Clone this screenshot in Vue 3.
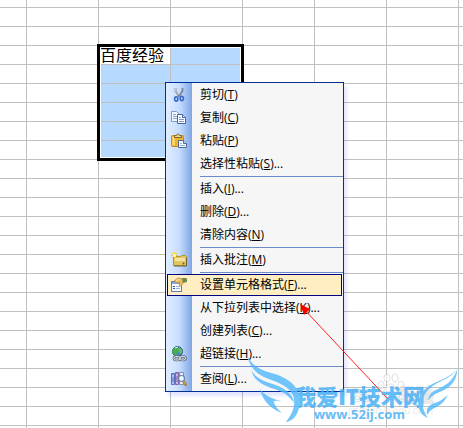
<script setup>
import { ref } from 'vue'

const rows = 60
const columns = 27
const activeItem = ref('format')

const groups = [
  [
    { id: 'cut', label: '剪切', hotkey: 'T', icon: 'cut' },
    { id: 'copy', label: '复制', hotkey: 'C', icon: 'copy' },
    { id: 'paste', label: '粘贴', hotkey: 'P', icon: 'paste' },
    { id: 'paste-special', label: '选择性粘贴', hotkey: 'S', more: true }
  ],
  [
    { id: 'insert', label: '插入', hotkey: 'I', more: true },
    { id: 'delete', label: '删除', hotkey: 'D', more: true },
    { id: 'clear', label: '清除内容', hotkey: 'N' }
  ],
  [{ id: 'comment', label: '插入批注', hotkey: 'M', icon: 'comment' }],
  [
    { id: 'format', label: '设置单元格格式', hotkey: 'F', more: true, icon: 'format' },
    { id: 'pick', label: '从下拉列表中选择', hotkey: 'K', more: true },
    { id: 'list', label: '创建列表', hotkey: 'C', more: true },
    { id: 'link', label: '超链接', hotkey: 'H', more: true, icon: 'link' }
  ],
  [{ id: 'lookup', label: '查阅', hotkey: 'L', more: true, icon: 'lookup' }]
]

function isSelected(row, col) {
  return row >= 4 && row <= 9 && (col === 3 || col === 4)
}

function isActiveCell(row, col) {
  return row === 4 && col === 3
}
</script>

<template>
  <main class="sheet">
    <table class="grid">
      <colgroup>
        <col class="first-col" />
        <col v-for="col in columns" :key="col" class="col" />
      </colgroup>
      <tbody>
        <tr v-for="row in rows" :key="row" :class="{ 'first-row': row === 1 }">
          <td
            v-for="col in columns + 1"
            :key="col"
            :class="{ selected: isSelected(row, col), active: isActiveCell(row, col) }"
          >{{ isActiveCell(row, col) ? '百度经验' : '' }}</td>
        </tr>
      </tbody>
    </table>
    <div class="selection"></div>

    <div class="menu" role="menu">
      <ul v-for="(group, index) in groups" :key="index" class="menu-group">
        <li v-for="item in group" :key="item.id">
          <button
            type="button"
            role="menuitem"
            class="menu-item"
            :class="{ highlighted: activeItem === item.id }"
            @mouseenter="activeItem = item.id"
          >
            <svg class="icon" viewBox="0 0 16 16" aria-hidden="true">
              <g v-if="item.icon === 'cut'" fill="none">
                <path d="M4.5 1v3l4 6M11.5 1v3l-4 6" stroke="#7d8794" stroke-width="1.8" />
                <path d="M4.5 1v3l3 4" stroke="#d3dbe6" stroke-width=".8" />
                <ellipse cx="5.2" cy="12" rx="1.6" ry="2.2" stroke="#3a6bd0" stroke-width="1.7" />
                <ellipse cx="10.8" cy="11.5" rx="1.6" ry="2.2" stroke="#3a6bd0" stroke-width="1.7" />
              </g>
              <g v-else-if="item.icon === 'copy'" stroke="#7b9bd0">
                <path d="M.5 1.5h5l3 3v7h-8z" fill="#f2f7ff" />
                <path d="M2 4.5h3M2 6.5h4M2 8.5h4" stroke="#85a9df" />
                <path d="M6.5 4.5h5l3 3v6h-8z" fill="#fff" stroke="#4267a5" />
                <path d="M11.5 4.5v3h3" fill="#c5daf8" stroke="#4267a5" />
                <path d="M8 7.5h2M8 9.500h5M8 11.5h5" stroke="#6f9be0" />
              </g>
              <g v-else-if="item.icon === 'paste'">
                <rect x=".5" y="2.5" width="12" height="11" rx="1" fill="#efb42f" stroke="#c48a1c" />
                <path d="M2.5 4v8" stroke="#ffe38b" stroke-width="2" />
                <path d="M3.5 4.5v-2h2c0-2 3-2 3 0h2v2z" fill="#e7d695" stroke="#806a25" />
                <path d="M7.5 7.5h5l3 3v4h-8z" fill="#f5f8ff" stroke="#536b92" />
                <path d="M12.5 7.5v3h3" fill="#cdddf5" stroke="#536b92" />
                <path d="M9 10.5h2M9 12.5h5" stroke="#9bb0d2" />
              </g>
              <g v-else-if="item.icon === 'comment'">
                <path d="M2.5 4.5h7l1-1h4l1 1v9h-13z" fill="#e3c55b" stroke="#b0953f" />
                <path d="M4 6h10v3H4z" fill="#f3e3a0" />
                <path d="M3 14h12.5V6" fill="none" stroke="#6b6336" />
                <circle cx="12.5" cy="11.5" r="1" fill="#6d602d" />
                <path d="M3.5 0v7M0 3.5h7M1 1l5 5M6 1L1 6" stroke="#f4c62b" />
                <circle cx="3.5" cy="3.5" r="1.5" fill="#fffbd1" />
              </g>
              <g v-else-if="item.icon === 'format'">
                <rect x=".5" y="4.5" width="10" height="10" fill="#f7faff" stroke="#627fae" />
                <path d="M1 6h9" stroke="#83a8e0" stroke-width="2" />
                <path d="M2 9.5h2M2 11.5h2" stroke="#2d559b" />
                <path d="M5 9.5h4M5 11.5h4" stroke="#9cb3d8" />
                <path d="M3 4l4-3 5 1v4l-2 3-2-1 1-3-3 1z" fill="#efc261" stroke="#b58a3a" stroke-width=".8" />
                <path d="M11 1h4l1 1v3l-4 1z" fill="#6d8a4b" />
                <path d="M5 3.5l3-1" stroke="#fff0b2" />
              </g>
              <g v-else-if="item.icon === 'link'">
                <circle cx="6.5" cy="5.5" r="5" fill="#3f80d0" stroke="#2c6076" />
                <path d="M3 2l3-1 2 2-2 2 1 2-3 3-2-3-1-2z" fill="#47ad4d" />
                <path d="M8 1l3 3v3l-2 1-2-3z" fill="#62be58" />
                <path d="M4 2l3-1" stroke="#e1fff1" />
                <g fill="none" stroke="#66707c" stroke-width="2.6">
                  <rect x="3" y="10.5" width="6" height="3.5" rx="1.7" />
                  <rect x="9" y="10.5" width="5.5" height="3.5" rx="1.7" />
                </g>
                <g fill="none" stroke="#e1e6eb">
                  <rect x="3" y="10.5" width="6" height="3.5" rx="1.7" />
                  <rect x="9" y="10.5" width="5.5" height="3.5" rx="1.7" />
                </g>
              </g>
              <g v-else-if="item.icon === 'lookup'">
                <path d="M.5 2.5h3v11h-3z" fill="#8295dc" stroke="#6070b8" />
                <path d="M4.5 1.5h3v12h-3z" fill="#a587cb" stroke="#7c66b0" />
                <path d="M1 5h2M1 12h2M5 4h2M5 12h2" stroke="#e8eaff" />
                <path d="M8.5 1.5h4v12h-4z" fill="#e5edf7" stroke="#8193b1" />
                <circle cx="10.5" cy="7.5" r="3" fill="#eaf6ff" stroke="#6a7f9a" stroke-width="1.2" />
                <path d="M12.5 10.5l3 4" stroke="#9c732b" stroke-width="2.5" />
                <path d="M12.5 10.5l2.5 3" stroke="#f2c451" />
              </g>
            </svg>
            <span>{{ item.label }}(<u>{{ item.hotkey }}</u>){{ item.more ? '...' : '' }}</span>
          </button>
        </li>
      </ul>
    </div>

    <svg class="baidu-mark" viewBox="0 0 96 46" aria-hidden="true">
      <g class="paw">
        <ellipse cx="35" cy="15" rx="3" ry="4" />
        <ellipse cx="41" cy="8" rx="3" ry="4" />
        <ellipse cx="49" cy="8" rx="3" ry="4" />
        <ellipse cx="55" cy="15" rx="3" ry="4" />
        <path d="M45 14c5 0 6 6 8 8 3 5-3 6-8 5-5 1-11 0-8-5 2-2 3-8 8-8z" />
      </g>
      <text x="5" y="32" class="baidu-name">Bai</text>
      <text x="52" y="32" class="baidu-name">经验</text>
      <text x="2" y="44" class="baidu-url">jingyan.baidu.com</text>
    </svg>

    <svg class="pointer" viewBox="0 0 90 98" aria-hidden="true">
      <path d="M2 3L88 95" stroke="#f22" />
      <path d="M0 0l10 5-6 6z" fill="#f00" />
    </svg>

    <div class="watermark">
      <svg class="wings" viewBox="0 0 699 264" aria-hidden="true">
        <path d="M53 50C70 84 102 92 137 103C184 119 212 146 209 190C206 226 190 242 167 247C189 220 199 191 189 166C180 143 151 129 122 119C86 107 61 87 53 50z" />
        <path d="M64 90C79 119 106 124 137 135C168 147 189 163 193 190C174 160 149 151 121 143C93 133 69 118 64 90z" />
        <path d="M90 146C102 166 123 174 155 184C133 180 128 182 133 190C137 202 146 212 157 219C128 209 98 187 90 146z" />
        <path d="M682 87C661 117 630 120 603 142C578 163 566 192 593 234C569 224 560 198 568 173C577 147 602 132 635 119C657 110 670 100 682 87z" />
        <path d="M682 88C681 120 664 141 638 152C618 161 604 166 594 181C597 163 608 153 630 144C657 132 671 115 682 88z" />
        <path d="M653 163C647 184 630 198 609 206C601 210 595 217 591 225C588 207 596 196 612 190C630 184 643 177 653 163z" />
      </svg>
      <strong class="site-name">我爱IT技术网</strong>
      <span class="site-url">www.52ij.com</span>
    </div>
  </main>
</template>

<style>
html,
body {
  margin: 0;
  background: #fff;
}
</style>

<style scoped>
.sheet {
  position: relative;
  height: 100vh;
  overflow: hidden;
  background: #fff;
  color: #000;
  font-family: "Open Sans", "Noto Sans CJK SC", sans-serif;
}

.grid {
  width: 1971px;
  table-layout: fixed;
  border-collapse: separate;
  border-spacing: 0;
}

.first-col {
  width: 27px;
}

.col {
  width: 72px;
}

tr {
  height: 19px;
}

.first-row {
  height: 8px;
}

td {
  box-sizing: border-box;
  padding: 0 1px;
  border-right: 1px solid #c0c0c0;
  border-bottom: 1px solid #c0c0c0;
  font-size: 16px;
  line-height: 18px;
  white-space: nowrap;
}

.selected {
  background: #b5d9ff;
}

.active {
  background: #fff;
}

.selection {
  position: absolute;
  left: 97px;
  top: 44px;
  box-sizing: border-box;
  width: 147px;
  height: 117px;
  border: 3px solid #000;
  box-shadow: inset 0 0 0 1px #fff;
}

.menu {
  position: absolute;
  left: 165px;
  top: 82px;
  box-sizing: border-box;
  width: 179px;
  padding-top: 1px;
  border: 1px solid #002d96;
  background: linear-gradient(90deg, #e0edff, #c8deff 50%, #80a6e5) 0 0 / 26px 100% no-repeat #f6f6f6;
  box-shadow: 3px 4px 3px rgba(80, 100, 255, 0.16);
}

.menu-group {
  margin: 0;
  padding: 0;
  list-style: none;
}

.menu-group + .menu-group::before {
  content: "";
  display: block;
  height: 1px;
  margin: 0 0 1px 34px;
  background: #6a8ccb;
}

.menu-item {
  display: flex;
  align-items: center;
  gap: 13px;
  box-sizing: border-box;
  width: 175px;
  height: 22px;
  margin: 0 1px 1px;
  padding: 0 3px;
  border: 1px solid transparent;
  background: transparent;
  color: #000;
  font: inherit;
  font-size: 12px;
  line-height: 20px;
  white-space: nowrap;
}

.menu-item.highlighted {
  border-color: #000080;
  background: #ffeec2;
}

.icon {
  flex: none;
  width: 16px;
  height: 16px;
}

.menu-item u {
  text-underline-offset: 1px;
}

.baidu-mark {
  position: absolute;
  left: 346px;
  top: 370px;
  width: 96px;
  height: 46px;
  fill: #fff;
  stroke: #ccc;
  opacity: 0.6;
}

.baidu-name {
  font-size: 18px;
  font-weight: 700;
}

.baidu-url {
  font-size: 10px;
  stroke: none;
  fill: #ddd;
}

.pointer {
  position: absolute;
  left: 300px;
  top: 304px;
  width: 90px;
  height: 98px;
  fill: none;
}

.watermark {
  position: absolute;
  left: 230px;
  top: 340px;
  display: flex;
  flex-direction: column;
  align-items: center;
  box-sizing: border-box;
  width: 233px;
  height: 88px;
  padding: 45px 0 0 26px;
  color: #3fadf5;
  opacity: 0.8;
  pointer-events: none;
}

.wings {
  position: absolute;
  left: 0;
  top: 0;
  width: 233px;
  height: 88px;
  fill: #50b8fa;
}

.site-name {
  font-size: 22px;
  font-weight: 900;
  line-height: 22px;
}

.site-url {
  font-size: 13px;
  font-weight: 700;
  line-height: 14px;
}
</style>
